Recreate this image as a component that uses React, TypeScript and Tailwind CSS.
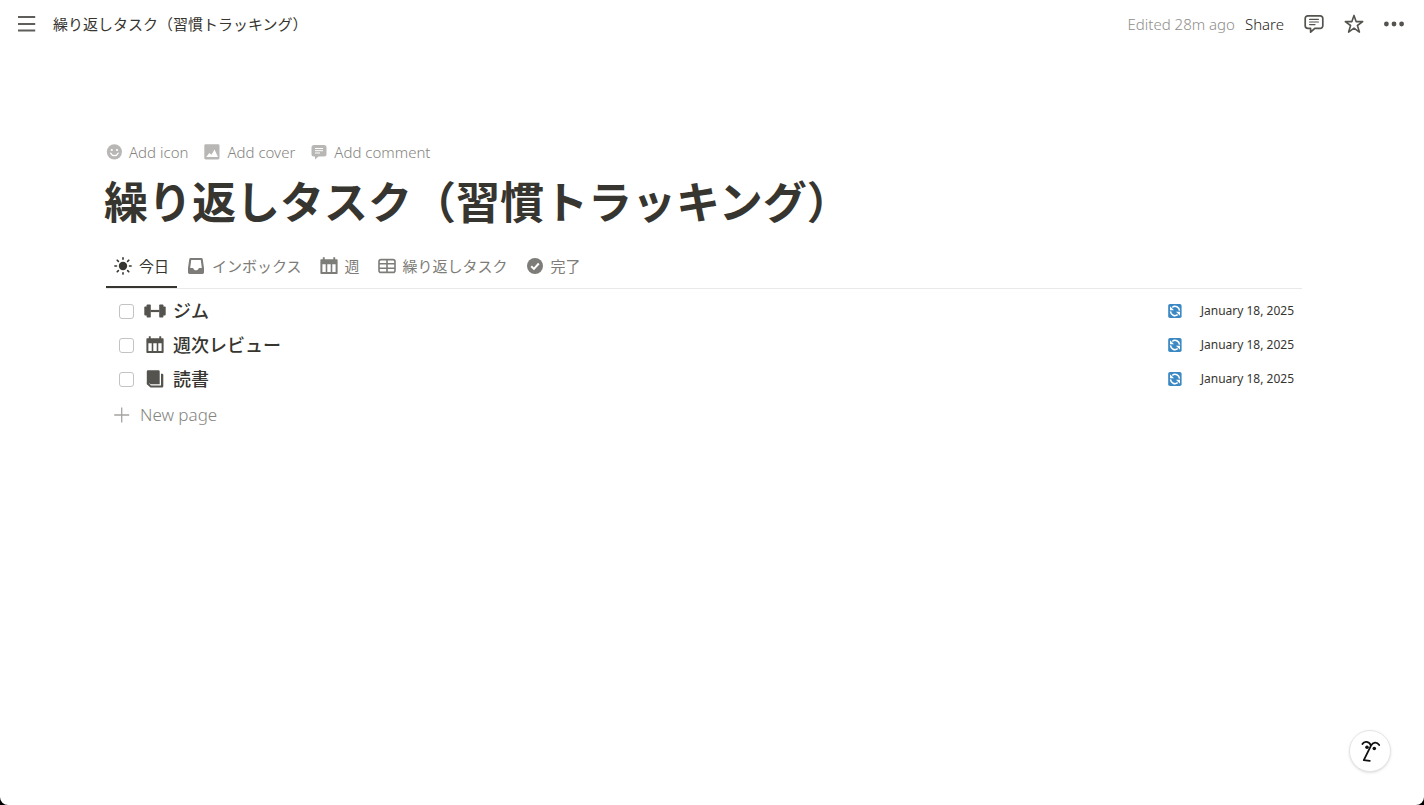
import * as React from "react";

type IconProps = { className?: string };

const TITLE = "繰り返しタスク（習慣トラッキング）";

function MenuIcon() {
  return (
    <svg className="h-[18px] w-[18px]" viewBox="0 0 18 18" stroke="currentColor" strokeWidth="1.8" aria-hidden>
      <path d="M0 2h17.2M0 9h17.2M0 15.5h17.2" />
    </svg>
  );
}

function CommentIcon() {
  return (
    <svg className="h-5 w-5" viewBox="0 0 20 20" fill="none" stroke="currentColor" strokeLinecap="round" strokeLinejoin="round" aria-hidden>
      <path strokeWidth="1.7" d="M3.8 1.8h12.4a2.6 2.6 0 0 1 2.6 2.6v7.4a2.6 2.6 0 0 1-2.6 2.6h-5.4L6.6 18.2v-3.8H3.8a2.6 2.6 0 0 1-2.6-2.6V4.4a2.6 2.6 0 0 1 2.6-2.6Z" />
      <path strokeWidth="1.2" d="M5.6 5.4h8.8M5.6 8h8.8M5.6 10.6h5.4" />
    </svg>
  );
}

function StarIcon() {
  return (
    <svg className="h-5 w-5" viewBox="0 0 20 20" fill="none" stroke="currentColor" strokeWidth="1.6" strokeLinejoin="round" aria-hidden>
      <path d="m10 1.4 2.1 6.2h6.6l-5.3 3.9 2 6.6L10 14.2l-5.4 3.9 2-6.6-5.3-3.9h6.6Z" />
    </svg>
  );
}

function DotsIcon() {
  return (
    <svg className="h-5 w-5" viewBox="0 0 20 20" fill="currentColor" aria-hidden>
      <circle cx="2.4" cy="10" r="2.4" />
      <circle cx="10" cy="10" r="2.4" />
      <circle cx="17.6" cy="10" r="2.4" />
    </svg>
  );
}

function SmileIcon() {
  return (
    <svg className="h-4 w-4" viewBox="0 0 16 16" aria-hidden>
      <circle cx="8.4" cy="7.8" r="7.6" fill="currentColor" />
      <circle cx="5.8" cy="6" r="1.1" fill="#fff" />
      <circle cx="11" cy="6" r="1.1" fill="#fff" />
      <path d="M4.7 9.2c1.4 3.2 6 3.2 7.4 0" fill="none" stroke="#fff" strokeWidth="1.3" strokeLinecap="round" />
    </svg>
  );
}

function CoverIcon() {
  return (
    <svg className="h-4 w-4" viewBox="0 0 16 16" aria-hidden>
      <rect x="0.3" y="0.3" width="15.2" height="15.2" rx="1.4" fill="currentColor" />
      <path d="m2.2 13 3.1-4 2.2 1.8 3-5.2 3.5 7.4Z" fill="#fff" />
    </svg>
  );
}

function BubbleIcon() {
  return (
    <svg className="h-4 w-4" viewBox="0 0 16 16" aria-hidden>
      <path d="M3 1h10a2.5 2.5 0 0 1 2.5 2.5V10a2.5 2.5 0 0 1-2.5 2.5H7.5l-3.500 3v-3H3A2.5 2.5 0 0 1 .5 10V3.500A2.500 2.500 0 0 1 3 1Z" fill="currentColor" />
      <path d="M4 4.5h8M4 6.7h8M4 9h5" stroke="#fff" strokeWidth="1" />
    </svg>
  );
}

function SunIcon({ className }: IconProps) {
  return (
    <svg className={className} viewBox="0 0 18 18" stroke="currentColor" strokeWidth="1.6" strokeLinecap="round" aria-hidden>
      <circle cx="9" cy="9" r="4.2" fill="currentColor" stroke="none" />
      <path d="M9 .9v1.4M9 15.7v1.4M.9 9h1.6M15.5 9h1.6M3.2 3.2l1.2 1.2M13.6 13.6l1.2 1.2M3.2 14.8l1.2-1.2M13.6 4.4l1.2-1.2" />
    </svg>
  );
}

function InboxIcon({ className }: IconProps) {
  return (
    <svg className={className} viewBox="0 0 18 18" fill="currentColor" fillRule="evenodd" aria-hidden>
      <path d="M3.6 1h10.8a1.3 1.3 0 0 1 1.3 1.1L17 11v4.6a1.4 1.4 0 0 1-1.4 1.4H2.4A1.4 1.4 0 0 1 1 15.600V11l1.300-8.900A1.300 1.300 0 0 1 3.600 1Zm.6 1.900L3.200 11h2.600c.7 0 .8 2.300 3.200 2.300s2.500-2.300 3.200-2.300h2.600l-1-8.100Z" />
    </svg>
  );
}

function CalendarIcon({ className }: IconProps) {
  return (
    <svg className={className} viewBox="0 0 18 18" fill="currentColor" fillRule="evenodd" aria-hidden>
      <path d="M2.8.3h1.900v1.900h8.600V.3h1.900v1.900H17a.6.6 0 0 1 .6.6v3.100H.4V2.800a.6.6 0 0 1 .6-.6h1.800Z" />
      <path d="M.4 5.8h17.2v10.4a.8.8 0 0 1-.8.8H1.200a.8.8 0 0 1-.8-.8Zm2 1.500v7.600h3.300V7.300Zm4.900 0v7.600h3.400V7.300Zm5 0v7.600h3.300V7.300Z" />
    </svg>
  );
}

function TableIcon({ className }: IconProps) {
  return (
    <svg className={className} viewBox="0 0 18 18" fill="none" stroke="currentColor" strokeWidth="1.6" aria-hidden>
      <rect x="1" y="2.6" width="16" height="12.8" rx="2" />
      <path d="M1 6.8h16M1 11.2h16M9 2.6v12.8" />
    </svg>
  );
}

function CheckIcon({ className }: IconProps) {
  return (
    <svg className={className} viewBox="0 0 18 18" aria-hidden>
      <circle cx="9" cy="9" r="8" fill="currentColor" />
      <path d="m5.2 9.3 2.7 2.6 4.9-5.4" fill="none" stroke="#fff" strokeWidth="2" />
    </svg>
  );
}

function DumbbellIcon() {
  return (
    <svg className="h-[22px] w-[22px]" viewBox="0 0 22 22" fill="currentColor" aria-hidden>
      <rect x="2.6" y="4.5" width="4.2" height="13" rx="0.8" />
      <rect x="15.2" y="4.5" width="4.2" height="13" rx="0.8" />
      <rect x="0.3" y="6.5" width="3.2" height="9" rx="1" />
      <rect x="18.5" y="6.5" width="3.2" height="9" rx="1" />
      <path d="M6.5 9.9h9v2.2h-9Z" />
    </svg>
  );
}

function BookIcon() {
  return (
    <svg className="h-[18px] w-[18px]" viewBox="0 0 18 18" fill="currentColor" aria-hidden>
      <path d="M2 .3h10.500a1.200 1.200 0 0 1 1.200 1.200v12.700H4.800L3 13.200H.8V1.500A1.200 1.200 0 0 1 2 .3Z" />
      <path d="M.8 12.800h1.900l2.300 2.600h10V3.800h1.200a1.100 1.100 0 0 1 1.100 1.100v11.400a1.200 1.200 0 0 1-1.200 1.200H4.500L.8 14.200Z" />
    </svg>
  );
}

function RepeatIcon() {
  return (
    <svg className="h-3.5 w-3.5" viewBox="0 0 14 14" role="img" aria-label="Repeats">
      <rect x="0.2" width="13.4" height="14" rx="1.8" fill="#3b88c3" />
      <path d="M4.3 3.3a4.500 4.500 0 0 1 7.200 3.300M9.700 10.700a4.500 4.500 0 0 1-7.200-3.300" fill="none" stroke="#fff" strokeWidth="1.5" />
      <path d="M2 2.300v4h4ZM12 11.700v-4H8Z" fill="#fff" />
    </svg>
  );
}

function FaceIcon() {
  return (
    <svg className="h-6 w-6" viewBox="0 0 24 24" fill="none" stroke="#111" strokeWidth="1.8" strokeLinecap="round" strokeLinejoin="round" aria-hidden>
      <path d="M4.400 5C6.200 1.800 11.200 2.200 13 6.600M21.200 6C19 2.800 15 2.900 13 6.600L5.800 21.200l6 .6" />
      <circle cx="9" cy="8.2" r="1.8" fill="#111" stroke="none" />
      <circle cx="16.3" cy="9.5" r="1.8" fill="#111" stroke="none" />
    </svg>
  );
}

const actions = [
  { label: "Add icon", Icon: SmileIcon },
  { label: "Add cover", Icon: CoverIcon },
  { label: "Add comment", Icon: BubbleIcon },
];

const tabs = [
  { label: "今日", Icon: SunIcon },
  { label: "インボックス", Icon: InboxIcon },
  { label: "週", Icon: CalendarIcon },
  { label: "繰り返しタスク", Icon: TableIcon },
  { label: "完了", Icon: CheckIcon },
];

const tasks = [
  { id: "gym", name: "ジム", icon: <DumbbellIcon />, date: "January 18, 2025" },
  { id: "review", name: "週次レビュー", icon: <CalendarIcon className="h-[18px] w-[18px]" />, date: "January 18, 2025" },
  { id: "reading", name: "読書", icon: <BookIcon />, date: "January 18, 2025" },
];

function TopBar() {
  return (
    <header className="flex h-12 items-center justify-between pr-5 pl-[18px] text-[15px] text-[#37352f]">
      <div className="flex items-center gap-[17px]">
        <button type="button" aria-label="Open sidebar" className="text-[#5f5e5b]">
          <MenuIcon />
        </button>
        <a href="#top">{TITLE}</a>
      </div>
      <div className="flex items-center gap-5 text-[#55534e]">
        <div className="flex gap-2.5 font-light">
          <span className="text-[#8f8e8a]">Edited 28m ago</span>
          <button type="button" className="text-[#1f1d18]">Share</button>
        </div>
        <button type="button" aria-label="Comments"><CommentIcon /></button>
        <button type="button" aria-label="Favorite"><StarIcon /></button>
        <button type="button" aria-label="More"><DotsIcon /></button>
      </div>
    </header>
  );
}

export default function App() {
  const [active, setActive] = React.useState("今日");
  const [done, setDone] = React.useState<string[]>([]);

  const toggle = (id: string) =>
    setDone((prev) => (prev.includes(id) ? prev.filter((d) => d !== id) : [...prev, id]));

  return (
    <div className="bg-black">
      <div className="min-h-screen rounded-b-lg bg-white font-['Noto_Sans','Noto_Sans_CJK_JP',sans-serif]">
        <TopBar />

        <main id="top" className="pt-[94px] pr-[122px] pl-[106px]">
          <div className="flex h-5 items-center gap-4 text-[15px] font-light text-[#858480]">
            {actions.map(({ label, Icon }) => (
              <button key={label} type="button" className="flex items-center gap-[7px]">
                <span className="text-[#b8b7b5]"><Icon /></span>
                {label}
              </button>
            ))}
          </div>

          <h1 className="mt-2 -ml-0.5 text-[44px] leading-[64px] font-bold text-[#37352f]">{TITLE}</h1>

          <div role="tablist" className="mt-3 flex h-[43px] gap-0.5 border-b border-[#e9e9e7] text-[15px]">
            {tabs.map(({ label, Icon }) => (
              <button
                key={label}
                type="button"
                role="tab"
                aria-selected={active === label}
                onClick={() => setActive(label)}
                className={
                  active === label
                    ? "flex items-center gap-[7px] border-b-2 border-[#37352f] px-2 text-[#37352f]"
                    : "flex items-center gap-[7px] border-b-2 border-transparent px-2 text-[#7d7c78]"
                }
              >
                <Icon className="h-[18px] w-[18px]" />
                {label}
              </button>
            ))}
          </div>

          <ul className="pt-[5px]">
            {tasks.map((task) => (
              <li key={task.id} className="flex h-[34px] items-center justify-between pr-2 pl-[13px]">
                <label className="flex items-center text-lg font-medium text-[#37352f]">
                  <input
                    type="checkbox"
                    checked={done.includes(task.id)}
                    onChange={() => toggle(task.id)}
                    className="h-[15px] w-[15px] appearance-none rounded-[3px] border border-[#c4c3c1] bg-white checked:bg-[#2383e2]"
                  />
                  <span className="mr-1.5 ml-[9px] flex w-6 justify-center text-[#55534e]">{task.icon}</span>
                  {task.name}
                </label>
                <div className="flex items-center gap-[19px] text-xs text-[#37352f]">
                  <RepeatIcon />
                  <time dateTime="2025-01-18">{task.date}</time>
                </div>
              </li>
            ))}
          </ul>

          <button type="button" className="flex h-[38px] items-center gap-2.5 pl-2 text-[17px] font-light text-[#858480]">
            <svg className="h-4 w-4 text-[#a5a4a1]" viewBox="0 0 16 16" stroke="currentColor" strokeWidth="1.3" aria-hidden>
              <path d="M7.7.5v15M.2 8h15" />
            </svg>
            New page
          </button>
        </main>

        <button
          type="button"
          aria-label="Open assistant"
          className="fixed right-[33px] bottom-[33px] flex h-[42px] w-[42px] items-center justify-center rounded-full border border-[#e4e4e3] bg-white shadow-sm"
        >
          <FaceIcon />
        </button>
      </div>
    </div>
  );
}
